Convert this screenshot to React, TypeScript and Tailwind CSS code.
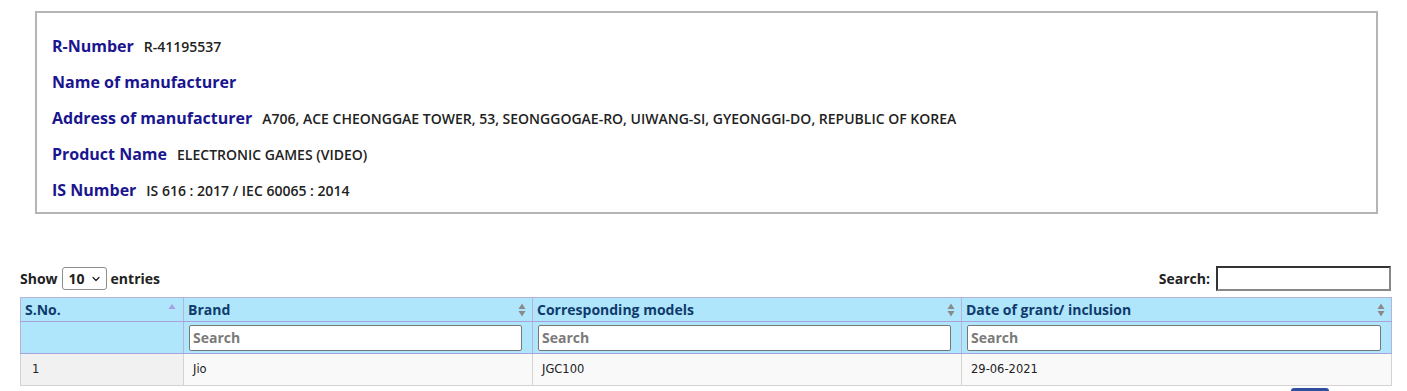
import { ChevronDown } from 'lucide-react';

const details = [
  { label: 'R-Number', value: 'R-41195537' },
  { label: 'Name of manufacturer', value: '' },
  {
    label: 'Address of manufacturer',
    value:
      'A706, ACE CHEONGGAE TOWER, 53, SEONGGOGAE-RO, UIWANG-SI, GYEONGGI-DO, REPUBLIC OF KOREA',
  },
  { label: 'Product Name', value: 'ELECTRONIC GAMES (VIDEO)' },
  { label: 'IS Number', value: 'IS 616 : 2017 / IEC 60065 : 2014' },
];

const columns = [
  { title: 'S.No.', width: 'w-[163px]', sorted: true, filter: false },
  { title: 'Brand', width: 'w-[349px]', sorted: false, filter: true },
  { title: 'Corresponding models', width: 'w-[429px]', sorted: false, filter: true },
  { title: 'Date of grant/ inclusion', width: 'w-[430px]', sorted: false, filter: true },
];

const rows = [['1', 'Jio', 'JGC100', '29-06-2021']];

function SortIcon({ sorted }: { sorted: boolean }) {
  if (sorted) {
    return (
      <svg width="8" height="12" viewBox="0 0 8 12" className="absolute right-[7px] top-[5px]">
        <path d="M4 1 L7.5 6 L0.5 6 Z" fill="#a99fe6" />
      </svg>
    );
  }
  return (
    <svg width="8" height="14" viewBox="0 0 8 14" className="absolute right-[6px] top-[5px]">
      <path d="M4 0.5 L7.5 6 L0.5 6 Z" fill="#8a8a8a" />
      <path d="M4 13.5 L7.5 8 L0.5 8 Z" fill="#8a8a8a" />
    </svg>
  );
}

export default function App() {
  return (
    <div className="w-[1407px] h-[391px] overflow-hidden bg-white font-['Open_Sans',sans-serif]">
      <div className="ml-[35px] mt-[11px] w-[1343px] border-2 border-[#b5b5b5] px-[15px] pt-[15px] pb-[4px]">
        {details.map((d) => (
          <div key={d.label} className="flex h-[36px] items-center">
            <span className="text-[16px] font-bold text-[#1a1690]">{d.label}</span>
            {d.value && (
              <span className="ml-[10px] text-[14px] font-semibold text-[#222]">{d.value}</span>
            )}
          </div>
        ))}
      </div>

      <div className="ml-[20px] mt-[50px] w-[1371px]">
        <div className="flex h-[28px] items-center justify-between">
          <div className="flex items-center text-[14px] font-bold text-[#222]">
            <span>Show</span>
            <div className="relative mx-[4px] flex h-[23px] w-[45px] items-center rounded-[3px] border border-[#8d8d8d] pl-[6px] text-[14px]">
              10
              <ChevronDown className="absolute right-[4px] top-[5px] h-[12px] w-[12px]" strokeWidth={2.5} />
            </div>
            <span>entries</span>
          </div>
          <div className="flex items-center text-[14px] font-bold text-[#222]">
            <span className="mr-[6px]">Search:</span>
            <div className="h-[25px] w-[175px] border-2 border-[#333] border-b-[#888] border-r-[#888]" />
          </div>
        </div>

        <table className="mt-[5px] w-[1371px] table-fixed border-collapse">
          <thead>
            <tr className="h-[24px] bg-[#b0e6fb]">
              {columns.map((c) => (
                <th
                  key={c.title}
                  className={`${c.width} relative border border-[#b6b3d6] border-b-[#a6a2e0] pl-[4px] text-left text-[14px] font-bold text-[#0f3b6c]`}
                >
                  {c.title}
                  <SortIcon sorted={c.sorted} />
                </th>
              ))}
            </tr>
            <tr className="h-[32px] bg-[#b0e6fb]">
              {columns.map((c) => (
                <th key={c.title} className="border border-[#b6b3d6] border-b-[#a6a2e0] pl-[5px] pr-[10px]">
                  {c.filter && (
                    <div className="flex h-[26px] items-center rounded-[2px] border border-[#767676] bg-white pl-[3px] text-[14px] font-bold text-[#7a7a7a]">
                      Search
                    </div>
                  )}
                </th>
              ))}
            </tr>
          </thead>
          <tbody>
            {rows.map((r) => (
              <tr key={r[0]} className="h-[32px] font-['DejaVu_Sans',sans-serif] text-[11.5px] text-[#222]">
                {r.map((cell, i) => (
                  <td
                    key={i}
                    className={`${i === 0 ? 'bg-[#f1f1f1] pl-[11px]' : 'bg-[#f9f9f9] pl-[9px]'} border border-[#d3d3d3]`}
                  >
                    {cell}
                  </td>
                ))}
              </tr>
            ))}
          </tbody>
        </table>
        <div className="flex justify-end pr-[62px] pt-[2px]">
          <div className="h-[10px] w-[38px] rounded-t-[3px] bg-[#2d4f9c]" />
        </div>
      </div>
    </div>
  );
}
